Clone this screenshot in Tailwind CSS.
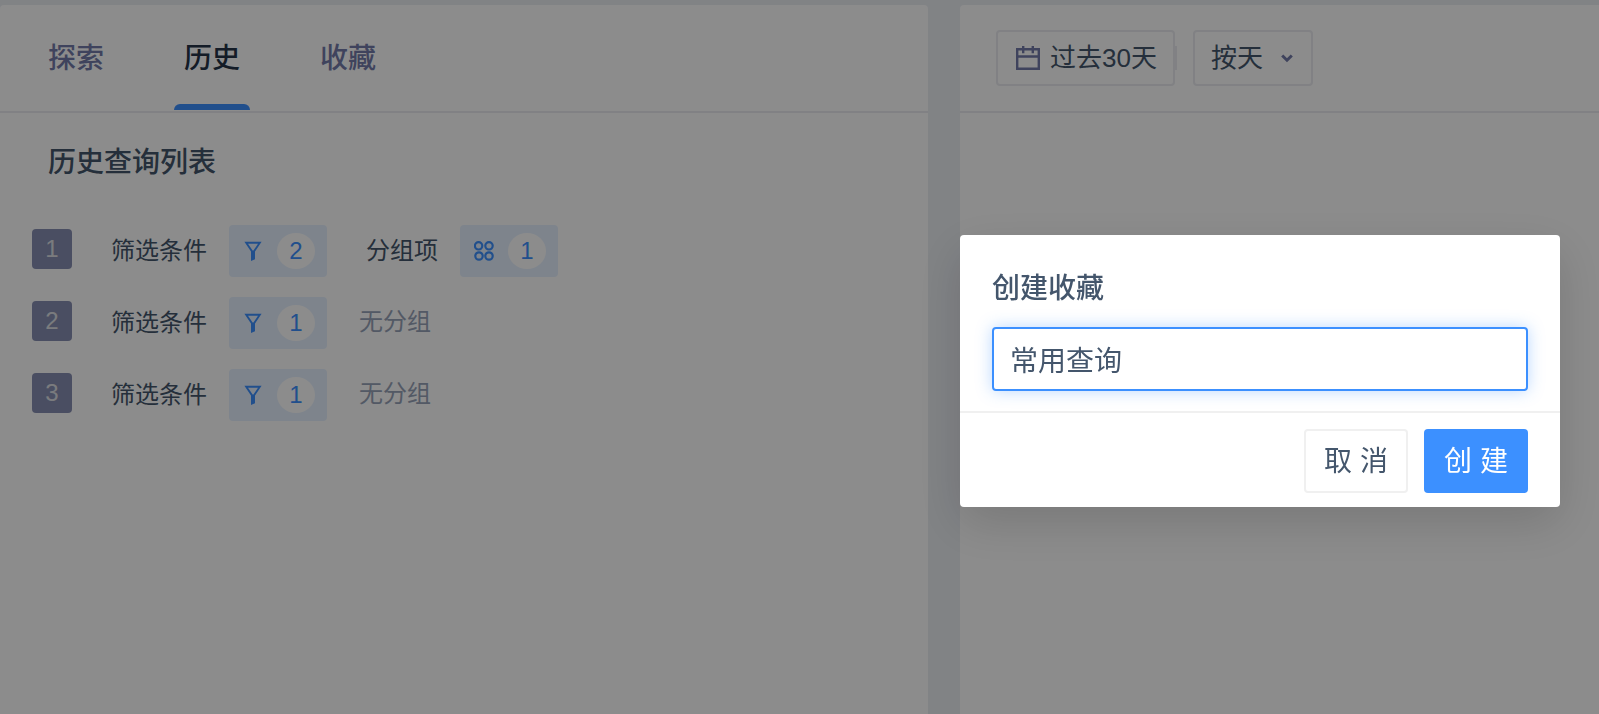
<!DOCTYPE html>
<html lang="zh-CN">
<head>
  <meta charset="UTF-8" />
  <meta name="viewport" content="width=device-width, initial-scale=1.0" />
  <title>历史查询列表</title>
  <script src="https://cdn.jsdelivr.net/npm/@tailwindcss/browser@4"></script>
</head>

<body class="min-h-screen bg-[#ebeef3] text-[#44566c] font-['Liberation_Sans','Noto_Sans_CJK_SC',sans-serif]">

  <!-- Icons -->
  <svg class="hidden" aria-hidden="true">
    <symbol id="icon-filter" viewBox="0 0 20 20">
      <path d="M3.2 1.8h13.6L10 11.8z" fill="none" stroke="currentColor" stroke-width="1.9" />
      <path d="M8 9.8h4v8.4l-4 1.8z" fill="currentColor" />
    </symbol>
    <symbol id="icon-group" viewBox="0 0 20 20">
      <g fill="none" stroke="currentColor" stroke-width="2.2">
        <circle cx="4.6" cy="4.8" r="3.7" />
        <circle cx="15" cy="4.8" r="3.7" />
        <circle cx="5" cy="15" r="3.7" />
        <circle cx="15" cy="15" r="3.7" />
      </g>
    </symbol>
  </svg>

  <main class="grid grid-cols-[928fr_639fr] gap-x-8 min-h-screen pt-[5px]">

    <!-- Query list -->
    <section class="bg-white rounded-t">
      <nav class="flex gap-[60px] h-[108px] px-[38px] border-b-2 border-[#ebecf0] text-[28px] font-medium">
        <a href="#explore" class="flex items-center px-[10px] pt-[2px] text-[#737ba9]">探索</a>
        <a href="#history" class="relative flex items-center px-[10px] pt-[2px] text-[#253347]" aria-current="page">历史
          <span class="absolute inset-x-0 bottom-[1px] h-[6px] rounded-t-[6px] bg-[#3c90ff]"></span>
        </a>
        <a href="#favorites" class="flex items-center px-[10px] pt-[2px] text-[#737ba9]">收藏</a>
      </nav>

      <h2 class="mt-[30px] px-12 text-[28px] leading-10 font-medium">历史查询列表</h2>

      <ul class="flex flex-col gap-5 mt-[42px] px-8 text-[24px] leading-9">
        <li class="flex items-center h-[52px]">
          <span class="w-10 h-10 mb-1 rounded bg-[#888fb2] text-[#dfe1e6] text-center leading-10">1</span>
          <span class="ml-[39px]">筛选条件</span>
          <button class="flex items-center ml-[22px] h-[52px] pl-[14px] pr-3 gap-[14px] rounded bg-[#e6f1ff] text-[#3c90ff]" aria-label="筛选条件 2">
            <svg class="w-5 h-5"><use href="#icon-filter" /></svg>
            <span class="w-[38px] h-9 rounded-[50%] bg-white text-center">2</span>
          </button>
          <span class="ml-[39px]">分组项</span>
          <button class="flex items-center ml-[22px] h-[52px] pl-[14px] pr-3 gap-[14px] rounded bg-[#e6f1ff] text-[#3c90ff]" aria-label="分组项 1">
            <svg class="w-5 h-5"><use href="#icon-group" /></svg>
            <span class="w-[38px] h-9 rounded-[50%] bg-white text-center">1</span>
          </button>
        </li>
        <li class="flex items-center h-[52px]">
          <span class="w-10 h-10 mb-1 rounded bg-[#888fb2] text-[#dfe1e6] text-center leading-10">2</span>
          <span class="ml-[39px]">筛选条件</span>
          <button class="flex items-center ml-[22px] h-[52px] pl-[14px] pr-3 gap-[14px] rounded bg-[#e6f1ff] text-[#3c90ff]" aria-label="筛选条件 1">
            <svg class="w-5 h-5"><use href="#icon-filter" /></svg>
            <span class="w-[38px] h-9 rounded-[50%] bg-white text-center">1</span>
          </button>
          <span class="ml-8 mb-[2px] text-[#97a3b8]">无分组</span>
        </li>
        <li class="flex items-center h-[52px]">
          <span class="w-10 h-10 mb-1 rounded bg-[#888fb2] text-[#dfe1e6] text-center leading-10">3</span>
          <span class="ml-[39px]">筛选条件</span>
          <button class="flex items-center ml-[22px] h-[52px] pl-[14px] pr-3 gap-[14px] rounded bg-[#e6f1ff] text-[#3c90ff]" aria-label="筛选条件 1">
            <svg class="w-5 h-5"><use href="#icon-filter" /></svg>
            <span class="w-[38px] h-9 rounded-[50%] bg-white text-center">1</span>
          </button>
          <span class="ml-8 mb-[2px] text-[#97a3b8]">无分组</span>
        </li>
      </ul>
    </section>

    <!-- Chart panel -->
    <section class="bg-white rounded-tl">
      <header class="flex items-center h-[108px] px-9 border-b-2 border-[#ebecf0] text-[26px]">
        <button class="flex items-center gap-[10px] h-14 pl-[18px] pr-4 border-2 border-[#ebecf0] rounded">
          <svg class="w-6 h-6 text-[#737ba9]" viewBox="0 0 24 24" fill="none" stroke="currentColor" stroke-width="2.4">
            <path d="M1.2 3.2h21.6v19.6H1.2zM1.2 10.5h21.6M7.2 0v7.2M16.8 0v7.2" />
          </svg>
          过去30天
        </button>
        <span class="w-[2px] h-6 bg-[#ebecf0]"></span>
        <label class="relative ml-4">
          <select class="appearance-none w-[120px] h-14 pl-4 border-2 border-[#ebecf0] rounded bg-white" aria-label="时间粒度">
            <option>按天</option>
            <option>按周</option>
            <option>按月</option>
          </select>
          <svg class="absolute right-5 top-6 w-3 h-[9px] text-[#737ba9] pointer-events-none" viewBox="0 0 12 9" fill="none" stroke="currentColor" stroke-width="3">
            <path d="M1.2 1.5 6 6.2l4.8-4.7" />
          </svg>
        </label>
      </header>
    </section>
  </main>

  <!-- Modal -->
  <div class="fixed inset-0 flex items-start justify-end pt-[235px] pr-[39px] bg-black/45">
    <form role="dialog" aria-labelledby="modalTitle" class="w-[600px] bg-white rounded shadow-[0_16px_48px_rgba(0,0,0,0.15)] text-[28px]">
      <div class="px-8 pt-[34px] pb-5">
        <label id="modalTitle" for="favoriteName" class="block leading-10 font-medium">创建收藏</label>
        <input type="text" id="favoriteName" value="常用查询"
          class="block w-full h-16 mt-[18px] px-4 border-2 border-[#3c90ff] rounded outline-none shadow-[0_0_16px_rgba(60,144,255,0.35)]" />
      </div>
      <div class="flex justify-end gap-4 px-8 pt-4 pb-[14px] border-t-2 border-[#f0f0f0]">
        <button type="button" class="w-[104px] h-16 pt-[2px] border-2 border-[#f0f0f0] rounded">取 消</button>
        <button type="submit" class="w-[104px] h-16 pt-[2px] rounded bg-[#3c90ff] text-white">创 建</button>
      </div>
    </form>
  </div>

</body>

</html>
